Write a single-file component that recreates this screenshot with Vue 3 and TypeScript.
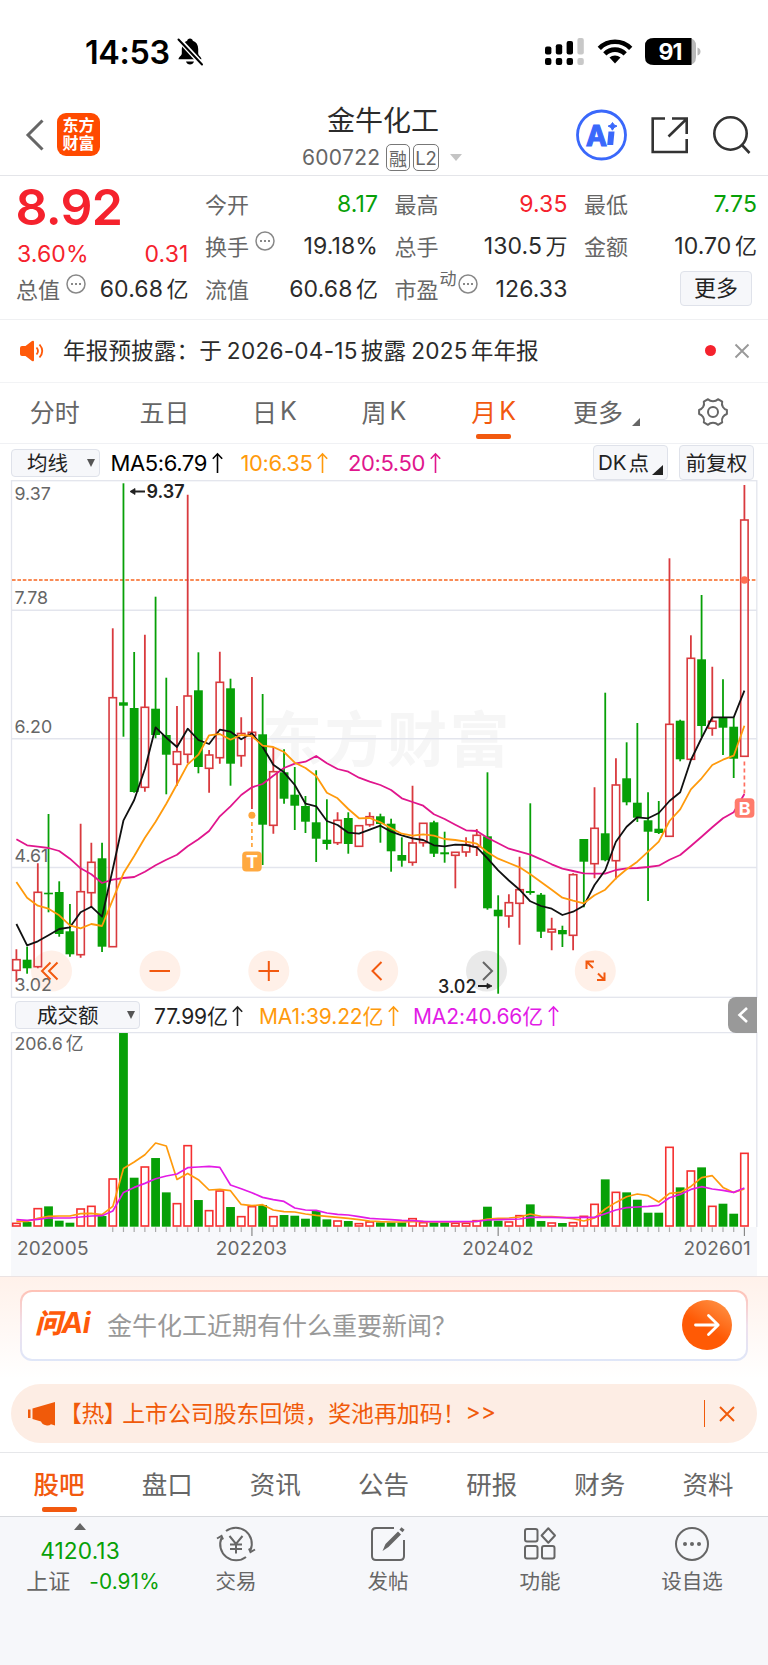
<script setup lang="ts">
type Candle = [dir: 'r' | 'g', high: number, top: number, bottom: number, low: number]

const STEP = 10.706
const cx = (i: number): number => 16.4 + i * STEP

const candles: Candle[] = [
  ['r', 949.3, 959.7, 970.3, 981.7], ['g', 946.7, 959.7, 968.3, 973.7], ['r', 863.3, 892.3, 966.7, 968.3],
  ['g', 814, 892.7, 894.3, 912.3], ['g', 881.3, 892, 934, 936.7], ['g', 904, 931.3, 954.3, 956.7],
  ['r', 823.7, 891.7, 954.7, 957.7], ['r', 842.7, 862.3, 892.7, 907.3], ['g', 842.7, 858.3, 946.7, 952],
  ['r', 628.3, 697.7, 946.7, 946.7], ['g', 483.3, 702.3, 705.7, 736.7], ['g', 652, 708, 792, 792.7],
  ['r', 634.7, 707.3, 787.3, 791.7], ['g', 596.7, 708.7, 735, 738.3], ['g', 677.7, 735, 754.7, 794.3],
  ['r', 706, 751.7, 764.3, 785.7], ['r', 494.7, 696, 754.3, 763.3], ['g', 652.3, 690.3, 767, 773.3],
  ['r', 750, 755, 768.3, 792.7], ['r', 651.7, 682.3, 757.7, 763.7], ['g', 678.7, 688.3, 763.7, 785.7],
  ['r', 717.3, 733.5, 755.7, 766.7], ['r', 677, 732.3, 735.5, 809], ['g', 694, 734.3, 824.7, 865],
  ['r', 747.3, 771.7, 825.3, 833.7], ['g', 749.3, 772.3, 798.7, 803.7], ['g', 767, 794.7, 805.7, 830],
  ['g', 796, 806, 821.7, 833], ['g', 770.3, 822.3, 838.7, 862], ['g', 799.3, 839.7, 844, 849.7],
  ['r', 812.3, 820.3, 842.7, 845], ['g', 812.3, 818, 844, 853.7], ['r', 825.7, 825.7, 846.3, 846.3],
  ['r', 812.3, 816.7, 824.7, 826.7], ['g', 813.7, 816.3, 824, 842.7], ['g', 818.7, 823.7, 851.3, 871.7],
  ['g', 837.3, 855, 860.7, 866.7], ['r', 785.7, 843, 862.3, 865.7], ['r', 823.3, 823.3, 842.7, 846.7],
  ['g', 820.7, 822.3, 853.7, 857], ['g', 831.7, 852.3, 854.3, 862.7], ['r', 852.3, 852.3, 855.3, 888.3],
  ['r', 837.3, 844.7, 852, 856.7], ['r', 829, 835.3, 846.7, 856], ['g', 772.3, 836.3, 908.3, 909.7],
  ['g', 895.3, 909.7, 916.3, 993.7], ['r', 894.3, 902.7, 916, 927.7], ['r', 856.7, 889.7, 903.3, 944.7],
  ['g', 803.3, 891, 893, 894.7], ['g', 893, 894.7, 931.7, 938], ['r', 917.7, 929.3, 932, 950.3],
  ['g', 925.7, 930, 934.3, 947], ['r', 873.3, 874.7, 935.3, 950.3], ['g', 839, 839, 861.7, 907.3],
  ['r', 787.3, 828.3, 863.7, 878.3], ['g', 692.7, 833.3, 860.3, 861.3], ['r', 758.3, 785, 860.7, 879.3],
  ['g', 742.3, 778.3, 802.3, 805.3], ['g', 723, 802.7, 817.7, 822], ['g', 792.3, 820.3, 831.7, 901],
  ['g', 801, 828.7, 833, 834], ['r', 558.3, 724.3, 836.3, 836.3], ['g', 719.7, 720.7, 759.3, 761.3],
  ['r', 635.3, 658.3, 759.3, 759.3], ['g', 595, 659.3, 726, 737], ['r', 666.7, 721.3, 728.3, 735.7],
  ['g', 679.3, 718, 727.7, 755], ['g', 717.7, 726.7, 758.7, 778], ['r', 485, 520, 756.3, 756.3],
]

const ma5 = [924, 945.3, 941.3, 935.3, 929, 927.3, 912.3, 906.7, 916.7, 869, 820.3, 800, 769, 727.3, 737.7, 747, 728.7, 740, 744, 729.7, 731.7, 739.3, 733.3, 746.7, 764.7, 772.3, 785, 803.7, 806.3, 821, 825, 832.7, 833.7, 829.7, 825.7, 831.7, 835.3, 838.3, 840, 845.3, 846.3, 844.7, 845, 847.3, 858.3, 870.3, 880.5, 889.7, 901.3, 906, 908.7, 915, 911.7, 905.7, 885, 870.3, 841.7, 826.7, 817.3, 818.3, 813, 801, 792.3, 760, 738, 717.3, 717.3, 717.3, 690.7]
const ma10 = [882, 897.7, 905.7, 908.7, 915.3, 925.3, 928.3, 924, 926, 899.7, 873.3, 856, 837.7, 821.7, 803.7, 784.3, 764.3, 754.7, 735.3, 734, 739.7, 735, 736, 745.7, 747, 752, 762.7, 768, 776, 792.7, 798.3, 809, 818.3, 818, 822.3, 828.3, 833.7, 835.7, 834.3, 835.7, 839, 840, 841.7, 843.7, 852.3, 858.7, 863, 867.3, 874.3, 882, 889.7, 897.7, 900.7, 903.3, 895.3, 889.7, 878.3, 869.3, 861.7, 851.7, 841.7, 821, 809.3, 789.3, 778.3, 765, 759.7, 755.7, 725.7]
const ma20 = [839.3, 845.3, 846.7, 848, 851, 858.7, 868.3, 874.3, 883, 879.7, 878, 877, 871.7, 865.3, 859.7, 854.7, 846.3, 839.3, 831, 816.3, 806.3, 795, 787.3, 784, 775.7, 768, 763.7, 761.7, 756, 763.3, 769, 771.7, 777.7, 781.7, 785, 790, 798.3, 802, 805.7, 814.3, 819, 824.7, 830.3, 831, 837.7, 843.3, 848.7, 851.7, 854.7, 859.3, 864.3, 868.7, 871, 873.3, 873.7, 873.7, 870, 868.3, 868, 867, 865.7, 859.7, 855, 846, 836.7, 827.3, 818.3, 812.3, 794]

/* turnover values, thirds of a pixel above the baseline */
const BASE = 695
const volTop = [684, 681, 640, 634, 677, 683, 641, 633, 663, 551, 114, 548, 515, 489, 592, 625, 451, 615, 646, 587, 636, 664, 634, 630, 664, 660, 662, 671, 648, 673, 677, 678, 685, 680, 682, 682, 682, 670, 682, 682, 682, 684, 684, 676, 635, 677, 680, 661, 628, 678, 683, 684, 682, 663, 627, 553, 591, 592, 614, 653, 653, 456, 577, 527, 517, 633, 626, 656, 474]
const vma1 = [679, 679, 670, 664, 663, 663, 656, 655, 659, 634, 520, 501, 479, 444, 453, 553, 535, 554, 585, 583, 587, 628, 632, 629, 645, 650, 651, 657, 661, 664, 667, 670, 674, 678, 680, 681, 681, 680, 680, 681, 681, 681, 681, 679, 672, 670, 669, 666, 657, 664, 665, 667, 671, 678, 669, 642, 622, 605, 597, 602, 621, 595, 592, 574, 548, 542, 577, 592, 582]
const vma2 = [674, 676, 673, 669, 669, 669, 666, 663, 662, 648, 592, 577, 565, 551, 543, 537, 518, 516, 514, 517, 570, 581, 593, 607, 614, 619, 639, 645, 646, 654, 658, 660, 665, 670, 672, 674, 676, 677, 679, 680, 680, 680, 680, 679, 675, 674, 673, 672, 667, 667, 667, 668, 668, 667, 667, 656, 645, 638, 636, 634, 631, 608, 598, 583, 575, 582, 586, 592, 579]

const vy = (v: number): number => 193.7 - (BASE - v) / 3
const volRed = (i: number): boolean => candles[i][0] === 'r' || i === 53
const line = (ys: number[]): string => ys.map((y, i) => `${cx(i).toFixed(1)},${y.toFixed(1)}`).join(' ')

const ticks = Array.from({ length: 60 }, (_, k) => k + 9).map((i) => ({ x: cx(i), long: i === 22 || i === 45 || i === 68 }))
const periods = ['分时', '五日', '日K', '周K', '月K', '更多']
const pages = ['股吧', '盘口', '资讯', '公告', '研报', '财务', '资料']
</script>

<template>
  <div class="app">
    <div class="status">
      <span class="time">14:53</span>
      <svg class="bell" width="28" height="30" viewBox="0 0 28 30">
        <path d="M14 1.500c1.600 0 2.600 1 2.800 2.200 3.600 1.200 5.400 4.300 5.400 8.300v4.500c0 2 3.300 3.600 3.300 5.800H2.500c0-2.200 3.300-3.800 3.300-5.800V12c0-4 1.800-7.100 5.400-8.300C11.400 2.500 12.400 1.500 14 1.500zM10 24.500h8c-.6 1.900-2 3-4 3s-3.400-1.100-4-3z" fill="#000" />
        <path d="M3 2.500L26 27.500" stroke="#fff" stroke-width="5" />
        <path d="M2.500 2.500L26 27.500" stroke="#000" stroke-width="2" stroke-linecap="round" />
      </svg>
      <svg class="sys" width="160" height="30" viewBox="543 37 160 30">
        <g fill="#000">
          <rect x="545" y="46.500" width="6.400" height="8" rx="2" /><rect x="555.800" y="44.300" width="6.400" height="10.200" rx="2" /><rect x="566.600" y="41" width="6.400" height="13.500" rx="2" />
          <rect x="545" y="58" width="6.400" height="7" rx="2" /><rect x="555.800" y="58" width="6.400" height="7" rx="2" /><rect x="566.600" y="58" width="6.400" height="7" rx="2" />
        </g>
        <g fill="#c8c8c8"><rect x="577.400" y="38" width="6.400" height="16.500" rx="2" /><rect x="577.400" y="58" width="6.400" height="7" rx="2" /></g>
        <g fill="none" stroke="#000" stroke-width="4.600">
          <path d="M599.300 48.300A22 22 0 0 1 630.700 48.300" /><path d="M604.800 53.800A14.500 14.500 0 0 1 625.200 53.800" />
        </g>
        <path d="M609.500 57.600a8 8 0 0 1 11 0L615 63.500z" fill="#000" />
        <path d="M654 38h34q8 0 8 8v11q0 8-8 8h-34q-9 0-9-8V46q0-8 9-8z" fill="#b9b9b9" />
        <path d="M654 38h37.500v27H654q-9 0-9-8V46q0-8 9-8z" fill="#000" />
        <path d="M697.500 47.500q3 1 3 4t-3 4z" fill="#b9b9b9" />
        <text x="670" y="59.800" text-anchor="middle" class="batt">91</text>
      </svg>
    </div>

    <header class="head">
      <svg class="back" width="22" height="34" viewBox="0 0 22 34"><path d="M18.500 2.500L4 17l14.500 14.500" fill="none" stroke="#666" stroke-width="3" /></svg>
      <div class="logo"><span>东方</span><span>财富</span></div>
      <div class="title">
        <h1>金牛化工</h1>
        <div class="code"><span class="num">600722</span><i>融</i><i class="l2">L2</i><b class="tri-down"></b></div>
      </div>
      <svg class="tools" width="180" height="56" viewBox="572 107 180 56">
        <circle cx="601.500" cy="135" r="24" fill="#fff" stroke="#3a68fb" stroke-width="2.800" />
        <text x="586" y="145.500" class="ai">A</text>
        <path d="M608.500 131.500h6l-1.300 13.500h-6z" fill="#3a68fb" />
        <path d="M612.500 122.500q1 3 4.500 3.600-3.500.8-4.600 4.100-1-3.300-4.300-4.100 3.400-.6 4.400-3.600z" fill="#3a68fb" stroke="#3a68fb" />
        <g fill="none" stroke="#333" stroke-width="2.600">
          <path d="M665 118.500h-12.300v33.500h34v-13M672 118.500h14.700V134M668.500 136.500L686 119.500" />
          <circle cx="730.500" cy="133.500" r="16.200" /><path d="M741.500 144.500l8 8.500" />
        </g>
      </svg>
    </header>

    <section class="stats">
      <div class="col first">
        <div class="price">8.92</div>
        <div class="cell chg red"><span>3.60%</span><span>0.31</span></div>
        <div class="cell"><label>总值<svg class="dots" width="20" height="20" viewBox="0 0 20 20"><circle cx="10" cy="10" r="9" /><path d="M5 10h2M9 10h2M13 10h2" /></svg></label><span>60.68<em>亿</em></span></div>
      </div>
      <div class="col">
        <div class="cell"><label>今开</label><span class="green">8.17</span></div>
        <div class="cell"><label>换手<svg class="dots" width="20" height="20" viewBox="0 0 20 20"><circle cx="10" cy="10" r="9" /><path d="M5 10h2M9 10h2M13 10h2" /></svg></label><span>19.18%</span></div>
        <div class="cell"><label>流值</label><span>60.68<em>亿</em></span></div>
      </div>
      <div class="col">
        <div class="cell"><label>最高</label><span class="red">9.35</span></div>
        <div class="cell"><label>总手</label><span>130.5<em>万</em></span></div>
        <div class="cell"><label>市盈<sup>动</sup><svg class="dots tight" width="20" height="20" viewBox="0 0 20 20"><circle cx="10" cy="10" r="9" /><path d="M5 10h2M9 10h2M13 10h2" /></svg></label><span>126.33</span></div>
      </div>
      <div class="col">
        <div class="cell"><label>最低</label><span class="green">7.75</span></div>
        <div class="cell"><label>金额</label><span>10.70<em>亿</em></span></div>
        <div class="cell end"><button class="more">更多</button></div>
      </div>
    </section>

    <section class="notice">
      <svg width="24" height="22" viewBox="0 0 24 22"><path d="M0 8q0-2 2-2h3.500L12 1q2-1 2 1v18q0 2-2 1l-6.500-5H2q-2 0-2-2z" fill="#ff5a0a" /><path d="M16.500 7.500q3 3.500 0 7M19.500 4.500q5.500 6.500 0 13" fill="none" stroke="#ff5a0a" stroke-width="1.800" /></svg>
      <p>年报预披露：于<span class="n">2026-04-15</span>披露<span class="n y">2025</span>年年报</p>
      <b class="dot"></b>
      <svg width="16" height="16" viewBox="0 0 16 16"><path d="M1.500 1.500l13 13M14.500 1.500l-13 13" stroke="#999" stroke-width="1.900" /></svg>
    </section>

    <nav class="periods">
      <div v-for="p in periods" :key="p" :class="{ on: p === '月K', more2: p === '更多' }">{{ p.replace('K', '') }}<span v-if="p.includes('K')" class="k">K</span></div>
      <div>
        <svg class="gear" width="32" height="32" viewBox="0 0 32 32" fill="none" stroke="#666" stroke-width="2"><path d="M11 3.200q2 2 5 2t5-2l4.200 2.500q-.8 3 .7 5.300t4 3v4q-2.500.8-4 3t-.7 5.300L21 28.800q-2-2-5-2t-5 2l-4.200-2.500q.8-3-.7-5.300t-4-3v-4q2.500-.8 4-3t.7-5.300z" stroke-linejoin="round" /><circle cx="16" cy="16" r="5" /></svg>
      </div>
    </nav>

    <div class="marow">
      <div class="select">均线<b></b></div>
      <span class="m1">MA5:6.79<svg class="up" width="11" height="22" viewBox="0 0 11 22"><path d="M5.500 21V2M.8 6.800L5.500 1.800l4.700 5" /></svg></span>
      <span class="m2">10:6.35<svg class="up" width="11" height="22" viewBox="0 0 11 22"><path d="M5.500 21V2M.8 6.800L5.500 1.800l4.700 5" /></svg></span>
      <span class="m3">20:5.50<svg class="up" width="11" height="22" viewBox="0 0 11 22"><path d="M5.500 21V2M.8 6.800L5.500 1.800l4.700 5" /></svg></span>
      <div class="btn dk">DK<em>点</em><b></b></div>
      <div class="btn">前复权</div>
    </div>

    <svg class="chart" width="768" height="518" viewBox="0 480 768 518">
      <text x="387" y="762" class="wm" text-anchor="middle">东方财富</text>
      <g stroke="#e3e5ed" stroke-width="1.300" fill="none">
        <rect x="11.500" y="480.700" width="745.300" height="516.600" />
        <path d="M11 610.200H757M11 738.800H757M11 867.500H757" stroke-width="1.600" />
      </g>
      <path d="M12 580H757" stroke="#f98a55" stroke-width="1.800" stroke-dasharray="3.600 1.800" />
      <g fill="#fff0e8">
        <circle cx="51.500" cy="971" r="20.500" /><circle cx="160" cy="971" r="20.500" /><circle cx="268.800" cy="971" r="20.500" />
        <circle cx="377.700" cy="971" r="20.500" /><circle cx="486.500" cy="971" r="20.500" fill="#e9e9e9" /><circle cx="595.300" cy="971" r="20.500" />
      </g>
      <g class="axis">
        <text x="14.500" y="500">9.37</text><text x="14.500" y="604">7.78</text><text x="14.500" y="733">6.20</text><text x="14.500" y="862">4.61</text><text x="14.500" y="991">3.02</text>
      </g>
      <g v-for="(c, i) in candles" :key="i">
        <template v-if="c[0] === 'g'">
          <path :d="`M${cx(i)} ${c[1]}V${c[4]}`" stroke="#07a007" stroke-width="1.800" />
          <rect :x="cx(i) - 4.400" :y="c[2]" width="8.800" :height="c[3] - c[2]" fill="#07a007" />
        </template>
        <template v-else>
          <path :d="`M${cx(i)} ${c[1]}V${c[2]}M${cx(i)} ${c[3]}V${c[4]}`" stroke="#d93a3e" stroke-width="1.800" />
          <rect :x="cx(i) - 3.700" :y="c[2]" width="7.400" :height="c[3] - c[2]" fill="none" stroke="#d93a3e" stroke-width="1.600" />
        </template>
      </g>
      <g fill="none" stroke-width="1.800" stroke-linejoin="round">
        <polyline :points="line(ma20)" stroke="#e0168d" /><polyline :points="line(ma5)" stroke="#111" /><polyline :points="line(ma10)" stroke="#ff9a0c" />
      </g>
      <g fill="none" stroke="#f2590f" stroke-width="2">
        <path d="M50.500 962.500L42 971l8.500 8.500M57.500 962.500L49 971l8.500 8.500" /><path d="M149.500 971h20.500M258.500 971H279M268.800 961v20M381.500 962L372.500 971l9 9" />
        <path d="M483 962l9 9-9 9" stroke="#666" /><path d="M586.500 969v-7.500h7.500M586.500 961.500l6.500 6.500M604.500 972.500v7.500H597M604.500 980l-6.500-6.500" />
      </g>
      <g stroke="#222" stroke-width="1.800"><path d="M132 491.500h13M478 986h11" /><path d="M135 488.500l-5 3 5 3zM487 983.500l5 2.500-5 2.500z" fill="#222" stroke-width=".8" /></g>
      <text x="146.500" y="498" class="mark top">9.37</text><text x="438" y="992.500" class="mark">3.02</text>
      <circle cx="251.900" cy="815.300" r="3.500" fill="#ffa53c" /><path d="M251.900 822V850" stroke="#ffa53c" stroke-width="1.700" stroke-dasharray="4 3" />
      <rect x="242.200" y="851.500" width="19.500" height="20" rx="4" fill="#ffa940" /><text x="252" y="867.700" text-anchor="middle" class="tag">T</text>
      <circle cx="744.400" cy="580" r="3.800" fill="#ff6f52" /><path d="M744.400 761.500V796" stroke="#ff6f60" stroke-width="1.700" stroke-dasharray="4 3" />
      <rect x="734.700" y="798.300" width="19.700" height="19.500" rx="4" fill="#ff7b6c" /><text x="744.600" y="814.500" text-anchor="middle" class="tag">B</text>
    </svg>

    <div class="volrow">
      <div class="select">成交额<b></b></div>
      <span class="v0">77.99亿<svg class="up" width="11" height="22" viewBox="0 0 11 22"><path d="M5.500 21V2M.8 6.800L5.500 1.800l4.700 5" /></svg></span>
      <span class="v1">MA1:39.22亿<svg class="up" width="11" height="22" viewBox="0 0 11 22"><path d="M5.500 21V2M.8 6.800L5.500 1.800l4.700 5" /></svg></span>
      <span class="v2">MA2:40.66亿<svg class="up" width="11" height="22" viewBox="0 0 11 22"><path d="M5.500 21V2M.8 6.800L5.500 1.800l4.700 5" /></svg></span>
      <div class="handle"><svg width="12" height="18" viewBox="0 0 12 18"><path d="M10 2L2.500 9l7.500 7" fill="none" stroke="#fff" stroke-width="2.600" /></svg></div>
    </div>

    <svg class="volume" width="768" height="244" viewBox="0 -1 768 244">
      <rect x="11" y="194" width="746" height="49" fill="#f7f8fb" />
      <path d="M11.500 194V-.4H756.800V194" fill="none" stroke="#e3e5ed" stroke-width="1.300" />
      <text x="14.500" y="16.800" class="axis">206.6<tspan dx="3">亿</tspan></text>
      <g v-for="(v, i) in volTop" :key="i">
        <rect v-if="volRed(i)" :x="cx(i) - 3.700" :y="vy(v) + .3" width="7.400" :height="Math.max(193 - vy(v) - .3, 1.500)" fill="#fff" stroke="#f53030" stroke-width="1.600" />
        <rect v-else :x="cx(i) - 4.400" :y="vy(v)" width="8.800" :height="193.700 - vy(v)" fill="#07a007" />
      </g>
      <g fill="none" stroke-width="1.700" stroke-linejoin="round">
        <polyline :points="line(vma1.map(vy))" stroke="#ff9a0c" /><polyline :points="line(vma2.map(vy))" stroke="#e21be6" />
      </g>
      <path v-for="t in ticks" :key="t.x" :d="`M${t.x} 194.300V${t.long ? 203 : 199}`" :stroke="t.long ? '#888' : '#aaa'" stroke-width="1.200" />
      <g class="date"><text x="17" y="222">202005</text><text x="251.500" y="222" text-anchor="middle">202203</text><text x="498" y="222" text-anchor="middle">202402</text><text x="751" y="222" text-anchor="end">202601</text></g>
    </svg>

    <section class="ask">
      <div class="box">
        <span class="wen"><b>问</b>Ai</span>
        <span class="q">金牛化工近期有什么重要新闻？</span>
        <svg width="50" height="50" viewBox="0 0 50 50"><defs><linearGradient id="go" x1="0.800" y1="0.100" x2="0.300" y2="0.900"><stop offset="0" stop-color="#ff8a3c" /><stop offset=".6" stop-color="#ff5a05" /></linearGradient></defs><circle cx="25" cy="25" r="25" fill="url(#go)" /><path d="M13.500 25H36M26.500 15.500l9.700 9.500-9.700 9.500" fill="none" stroke="#fff" stroke-width="2.800" stroke-linecap="round" stroke-linejoin="round" /></svg>
      </div>
    </section>

    <section class="hot">
      <svg width="28" height="24" viewBox="0 0 28 24" fill="#f05a0a"><path d="M0 7.500h2.500v8.500H0zM4.500 6.500L27 0v23.500l-4-1.200q-2 1.700-5 1-4-.8-5-3.800L4.500 17z" /></svg>
      <span class="ht">【热】</span><span class="hb">上市公司股东回馈，奖池再加码！</span><span class="gg">&gt;&gt;</span>
      <i></i>
      <svg class="x" width="16" height="16" viewBox="0 0 16 16"><path d="M1 1l14 14M15 1L1 15" stroke="#f05a0a" stroke-width="1.900" /></svg>
    </section>

    <nav class="pages"><div v-for="p in pages" :key="p" :class="{ on: p === '股吧' }">{{ p }}</div></nav>

    <footer class="bar">
      <div class="index"><b></b><strong>4120.13</strong><p>上证<span>-0.91%</span></p></div>
      <div class="item">
        <svg width="40" height="36" viewBox="0 0 40 36"><path d="M10 5A16 16 0 0 1 34.500 24M30 31A16 16 0 0 1 5.500 12M1 12.500l4.500-2.500 1.500 3.500M39 23.500l-4.500 2.500-1.500-3.500M13.500 10l6.500 8 6.500-8M20 18v9.500M14 18.500h12M14 23h12" /></svg>
        <span>交易</span>
      </div>
      <div class="item">
        <svg width="36" height="36" viewBox="0 0 36 36"><path d="M24 2H6Q2 2 2 6v24q0 4 4 4h24q4 0 4-4V14" /><path d="M12.500 25l3-7L28 5.500l3 3L18.500 21z" fill="#666" stroke="none" /><path d="M31 5l2-2.500" stroke-width="4" /></svg>
        <span>发帖</span>
      </div>
      <div class="item">
        <svg width="36" height="36" viewBox="0 0 36 36"><rect x="3" y="3" width="12.500" height="12.500" rx="2" /><rect x="3" y="20" width="12.500" height="12.500" rx="2" /><rect x="20" y="20" width="12.500" height="12.500" rx="2" /><path d="M26.300 2.200L33 9.500l-6.700 7.300-6.700-7.300z" stroke-linejoin="round" /></svg>
        <span>功能</span>
      </div>
      <div class="item">
        <svg width="36" height="36" viewBox="0 0 36 36"><circle cx="18" cy="18" r="16" /><g fill="#666" stroke="none"><circle cx="11" cy="18" r="2" /><circle cx="18" cy="18" r="2" /><circle cx="25" cy="18" r="2" /></g></svg>
        <span>设自选</span>
      </div>
    </footer>
  </div>
</template>

<style>
body { background: #fff; }
</style>

<style scoped>
.app { width: 768px; height: 1665px; overflow: hidden; background: #fff; color: #2b2b2b; font-family: Inter, "Noto Sans CJK SC", sans-serif; font-size: 22px; display: flex; flex-direction: column; }
.app * { box-sizing: border-box; }
i, em { font-style: normal; }
p, h1 { margin: 0; font-weight: 400; }
.red { color: #f5222d; }
.green { color: #07a007; }

.status { height: 90px; display: flex; align-items: center; padding: 14px 65px 0 85px; flex: none; }
.time { font-size: 32.300px; font-weight: 600; color: #000; width: 91px; letter-spacing: -.3px; }
.sys { margin-left: auto; }
.batt { font-size: 23px; font-weight: 700; fill: #fff; letter-spacing: -1px; }

.head { height: 86px; flex: none; border-bottom: 1.500px solid #e4e5e9; display: flex; align-items: center; padding: 4px 16px 0 24px; }
.logo { margin-left: 11px; width: 43px; height: 43px; border-radius: 9px; background: #ff4a00; color: #fff; display: flex; flex-direction: column; align-items: center; justify-content: center; font-size: 16px; line-height: 17.500px; font-weight: 700; }
.title { margin: 4px auto 0 201px; width: 200px; }
.title h1 { font-size: 28px; line-height: 38px; margin-left: 26px; white-space: nowrap; }
.title .code { display: flex; align-items: center; color: #666; height: 28px; margin-top: 4px; }
.num { font-size: 21px; width: 84px; letter-spacing: .3px; margin-left: 1px; }
.code i { width: 24px; height: 27px; border: 1.500px solid #777; border-radius: 5px; font-size: 18px; display: flex; align-items: center; justify-content: center; margin-right: 3px; }
.code .l2 { width: 26px; font-size: 18.500px; }
.tri-down { border: 6px solid transparent; border-top: 7px solid #c4c4c4; border-bottom: 0; margin-left: 8px; }
.ai { font: 700 28px Inter; fill: #3a68fb; stroke: #3a68fb; stroke-width: 1.200; }

.stats { height: 144px; flex: none; border-bottom: 1.500px solid #eff0f2; padding: 7px 11.500px 0 17px; display: grid; grid-template-columns: 171.500px 172px 172px 172px; column-gap: 17.500px; }
.col { display: grid; grid-template-rows: 42px 42.500px 43px; }
.first { grid-template-rows: 48.500px 36px 43px; }
.price { color: #f5222d; font-size: 50px; font-weight: 600; line-height: 49px; letter-spacing: -.7px; margin-left: -1.500px; }
.cell { display: flex; justify-content: space-between; align-items: center; white-space: nowrap; font-size: 23px; letter-spacing: .1px; }
.cell.end { justify-content: flex-end; padding-right: 5px; }
.chg { padding-top: 8px; }
.cell label { color: #666; display: flex; align-items: center; font-size: 22px; letter-spacing: 0; margin: -3px 0 0 -1px; }
.cell em { margin-left: 3.500px; font-size: 22px; line-height: 22px; letter-spacing: 0; }
.dots { fill: none; stroke: #888; stroke-width: 1.500; margin: -7px 0 0 6px; }
.dots path { stroke-width: 2; }
.dots.tight { margin-left: 1px; }
sup { font-size: 17px; line-height: 17px; margin: -16px 0 0 1px; }
.more { width: 72px; height: 35px; border: 1.500px solid #dfe2ea; border-radius: 4px; background: #f6f7fa; font: 22px Inter, "Noto Sans CJK SC", sans-serif; color: #222; padding: 0; line-height: 29px; margin-top: -2px; }

.notice { height: 62.500px; flex: none; border-bottom: 1.500px solid #f2f3f5; display: flex; align-items: center; padding: 0 18px 0 20px; }
.notice p { font-size: 22.600px; margin: -2px 0 0 19px; white-space: nowrap; color: #2b2b2b; letter-spacing: .1px; }
.n { margin: 0 3px 0 5px; letter-spacing: .25px; }
.dot { width: 11px; height: 11px; border-radius: 50%; background: #f5222d; margin: 0 18px 0 auto; }

.periods { height: 61.500px; flex: none; display: grid; grid-template-columns: repeat(7, 1fr); border-bottom: 1.500px solid #f0f1f4; }
.periods div { display: flex; align-items: center; justify-content: center; font-size: 25px; color: #666; position: relative; padding-bottom: 3px; }
.gear { margin-top: 2px; }
.k { margin-left: 3px; }
.periods .on { color: #f2590f; }
.on::after { content: ""; position: absolute; bottom: 4px; left: 50%; width: 35px; height: 5.500px; margin-left: -17.500px; border-radius: 2px; background: #f2590f; }
.periods .more2 { padding-right: 11px; }
.more2::after { content: ""; position: absolute; right: 18px; bottom: 17px; border-left: 8px solid transparent; border-bottom: 8px solid #666; }

.marow { height: 36px; flex: none; display: flex; align-items: center; padding: 1px 14px 0 11px; font-size: 22px; letter-spacing: -.4px; white-space: nowrap; }
.select { height: 28px; border: 1.500px solid #dfe2ea; border-radius: 4px; background: #f6f7fa; display: flex; align-items: center; justify-content: space-between; font-size: 20.500px; letter-spacing: 0; color: #222; padding: 0 4.500px 2px 15px; width: 89px; flex: none; }
.select b { border: 4.500px solid transparent; border-top: 8px solid #555; border-bottom: 0; margin-top: 2px; }
.up { fill: none; stroke: currentColor; stroke-width: 1.600; margin-left: 5px; vertical-align: -3px; }
.m1 { color: #000; width: 130px; margin-left: 10.500px; }
.m2 { color: #ff9a0c; width: 107.500px; }
.m3 { color: #e0168d; }
.btn { width: 75px; height: 35px; border: 1.500px solid #dfe2ea; border-radius: 4px; background: #f6f7fa; font-size: 20.500px; letter-spacing: 0; display: flex; align-items: center; justify-content: center; color: #222; padding-bottom: 1px; }
.dk { margin: 0 11px 0 auto; justify-content: flex-start; padding-left: 4px; position: relative; }
.dk b { position: absolute; right: 4px; bottom: 4px; border-left: 11px solid transparent; border-bottom: 10px solid #222; }
.dk em { margin-left: 2px; }
.chart, .volume { display: block; flex: none; }
.wm { font: 700 60px "Noto Sans CJK SC"; fill: #f6f6f6; letter-spacing: 2.500px; }
.axis { font-size: 17.800px; fill: #666; }
.mark { font-size: 18px; font-weight: 500; fill: #222; }
.top { font-weight: 600; }
.tag { font-size: 18px; font-weight: 700; fill: #fff; }
.date { font-size: 19px; fill: #666; letter-spacing: .15px; }

.volrow { height: 34px; flex: none; display: flex; align-items: center; padding: 0 11px 0 15px; font-size: 21px; white-space: nowrap; letter-spacing: -.1px; }
.volrow .select { width: 125px; padding-left: 21px; }
.v0 { color: #222; width: 105px; margin-left: 14px; }
.v1 { color: #ff9a0c; width: 154px; }
.v2 { color: #e21be6; }
.v0 .up, .v1 .up, .v2 .up { margin-left: 4.500px; }
.handle { width: 29px; height: 36px; margin: -1px 0 -1px auto; background: #999; border-radius: 8px 0 0 8px; display: flex; align-items: center; justify-content: center; position: relative; }

.ask { height: 108px; flex: none; border-top: 1.500px solid #ebe3e3; background: linear-gradient(#fff1ea, #fff 95%); padding: 12.500px 20px 0; }
.box { height: 71px; border: 2px solid transparent; border-radius: 12px; background: linear-gradient(#fff, #fff) padding-box, linear-gradient(#ffc2b6, #eee0ec 50%, #dfe6f8) border-box; display: flex; align-items: center; padding: 0 14px 0 13px; }
.wen { width: 72px; color: #ff5a0a; font-weight: 700; font-size: 29px; font-style: italic; letter-spacing: -.5px; white-space: nowrap; line-height: 40px; margin-top: -3px; }
.wen b { font-size: 27px; font-weight: 900; }
.q { font-size: 25px; color: #999; white-space: nowrap; margin-top: -2px; }
.box svg { margin-left: auto; flex: none; }

.hot { height: 59px; flex: none; margin: 0 11px; border-radius: 30px; background: #fdede4; color: #f05a0a; display: flex; align-items: center; padding: 0 22px 0 17px; font-size: 22.900px; white-space: nowrap; }
.ht { margin-left: 3px; letter-spacing: -.5px; }
.hb { margin-left: -4px; }
.ht, .hb, .gg { margin-top: -3px; }
.hot i { width: 1.500px; height: 27px; background: #f05a0a; margin: 0 14px 0 auto; }

.pages { height: 65px; flex: none; margin-top: 9px; border-top: 1.500px solid #e6e7ea; display: grid; grid-template-columns: repeat(7, 1fr); padding: 0 6px 0 5px; border-bottom: 1.500px solid #d8dade; }
.pages div { position: relative; display: flex; align-items: center; justify-content: center; font-size: 25.500px; color: #666; padding-bottom: 4px; }
.pages .on { color: #f2590f; font-weight: 500; }

.bar { flex: 1; background: #f6f7fa; display: grid; grid-template-columns: 160px repeat(4, 152px); color: #666; }
.index { display: flex; flex-direction: column; align-items: center; padding-top: 6px; }
.index b { border: 6.500px solid transparent; border-bottom: 7px solid #666; border-top: 0; }
.index strong { font-weight: 400; color: #07a007; font-size: 22.700px; line-height: 28px; margin-top: 7px; letter-spacing: .1px; }
.index p { font-size: 22px; line-height: 32px; padding-left: 26px; white-space: nowrap; }
.index span { color: #07a007; font-size: 20.800px; margin-left: 19px; letter-spacing: .1px; }
.item { display: flex; flex-direction: column; align-items: center; padding-top: 9px; font-size: 20.500px; }
.item svg { fill: none; stroke: #666; stroke-width: 2; }
.item span { line-height: 30px; margin-top: 5px; }
</style>
